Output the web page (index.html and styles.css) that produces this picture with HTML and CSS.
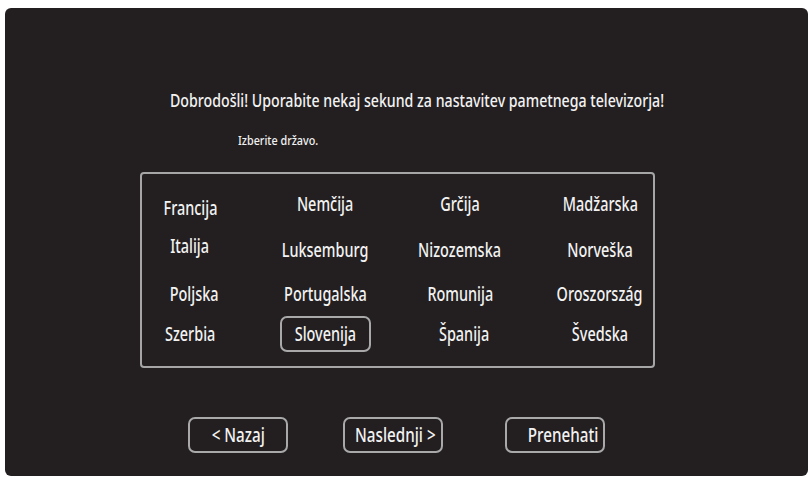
FILE: index.html
```html
<!DOCTYPE html>
<html lang="sl">
<head>
<meta charset="utf-8">
<title>Nastavitev</title>
<link rel="stylesheet" href="styles.css">
</head>
<body>
<div class="panel">
  <h1 class="title"><span class="title-text">Dobrodošli! Uporabite nekaj sekund za nastavitev pametnega televizorja!</span></h1>
  <p class="subtitle"><span class="subtitle-text">Izberite državo.</span></p>
  <div class="box">
    <div class="grid">
      <span class="cell low">Francija</span>
      <span class="cell">Nemčija</span>
      <span class="cell">Grčija</span>
      <span class="cell">Madžarska</span>
      <span class="cell high">Italija</span>
      <span class="cell">Luksemburg</span>
      <span class="cell">Nizozemska</span>
      <span class="cell">Norveška</span>
      <span class="cell right">Poljska</span>
      <span class="cell">Portugalska</span>
      <span class="cell">Romunija</span>
      <span class="cell">Oroszország</span>
      <span class="cell">Szerbia</span>
      <span class="selected"><span class="cond">Slovenija</span></span>
      <span class="cell right">Španija</span>
      <span class="cell">Švedska</span>
    </div>
  </div>
  <div class="actions">
    <span class="btn"><span class="btn-text">&lt; Nazaj</span></span>
    <span class="btn"><span class="btn-text">Naslednji &gt;</span></span>
    <span class="btn last"><span class="btn-text">Prenehati</span></span>
  </div>
</div>
</body>
</html>
```
FILE: styles.css
```css
html, body {
  margin: 0;
  padding: 0;
  background: #ffffff;
}
body {
  font-family: "Noto Sans", "Open Sans", sans-serif;
  color: #f2f2f2;
}
.panel {
  box-sizing: border-box;
  margin: 8px 4px 0 5px;
  height: 468px;
  background: #231f20;
  border-radius: 6px;
  padding-top: 81px;
  overflow: hidden;
}
.title {
  margin: 0 0 0 165px;
  font-size: 17.5px;
  font-weight: 500;
  line-height: 22px;
  white-space: nowrap;
}
.title-text {
  display: inline-block;
  transform: scaleX(0.81);
  transform-origin: left center;
}
.subtitle {
  margin: 21px 0 0 233px;
  font-size: 13px;
  font-weight: 500;
  line-height: 16px;
  white-space: nowrap;
}
.subtitle-text {
  display: inline-block;
  transform: scaleX(0.83);
  transform-origin: left center;
}
.box {
  box-sizing: border-box;
  margin: 24px 0 0 135px;
  width: 515px;
  height: 196px;
  border: 2px solid #a6a6a6;
  border-radius: 4px;
  padding: 8px 0 0 1px;
}
.grid {
  display: grid;
  grid-template-columns: 94px 94px 94px 104px;
  grid-template-rows: 44px 47px 42px 38px;
  column-gap: 41px;
  justify-items: center;
  align-items: center;
}
.cell {
  font-size: 19px;
  font-weight: 500;
  line-height: 24px;
  white-space: nowrap;
  transform: scaleX(0.76);
}
.low { margin-top: 7px; }
.high { margin-bottom: 8px; }
.right { margin-left: 8px; }
.selected {
  box-sizing: border-box;
  width: 91px;
  height: 36px;
  border: 2px solid #a9a9a9;
  border-radius: 7px;
  font-size: 19px;
  font-weight: 500;
  line-height: 32px;
  text-align: center;
  white-space: nowrap;
}
.cond {
  display: inline-block;
  transform: scaleX(0.76);
}
.actions {
  display: flex;
  gap: 55px;
  margin: 49px 0 0 183px;
}
.btn {
  box-sizing: border-box;
  width: 100px;
  height: 36px;
  border: 2px solid #a9a9a9;
  border-radius: 7px;
  font-size: 19px;
  font-weight: 500;
  line-height: 32px;
  text-align: center;
  white-space: nowrap;
}
.btn-text {
  display: inline-block;
  transform: scaleX(0.8);
}
.last {
  margin-left: 7px;
  padding-left: 12px;
}
```
